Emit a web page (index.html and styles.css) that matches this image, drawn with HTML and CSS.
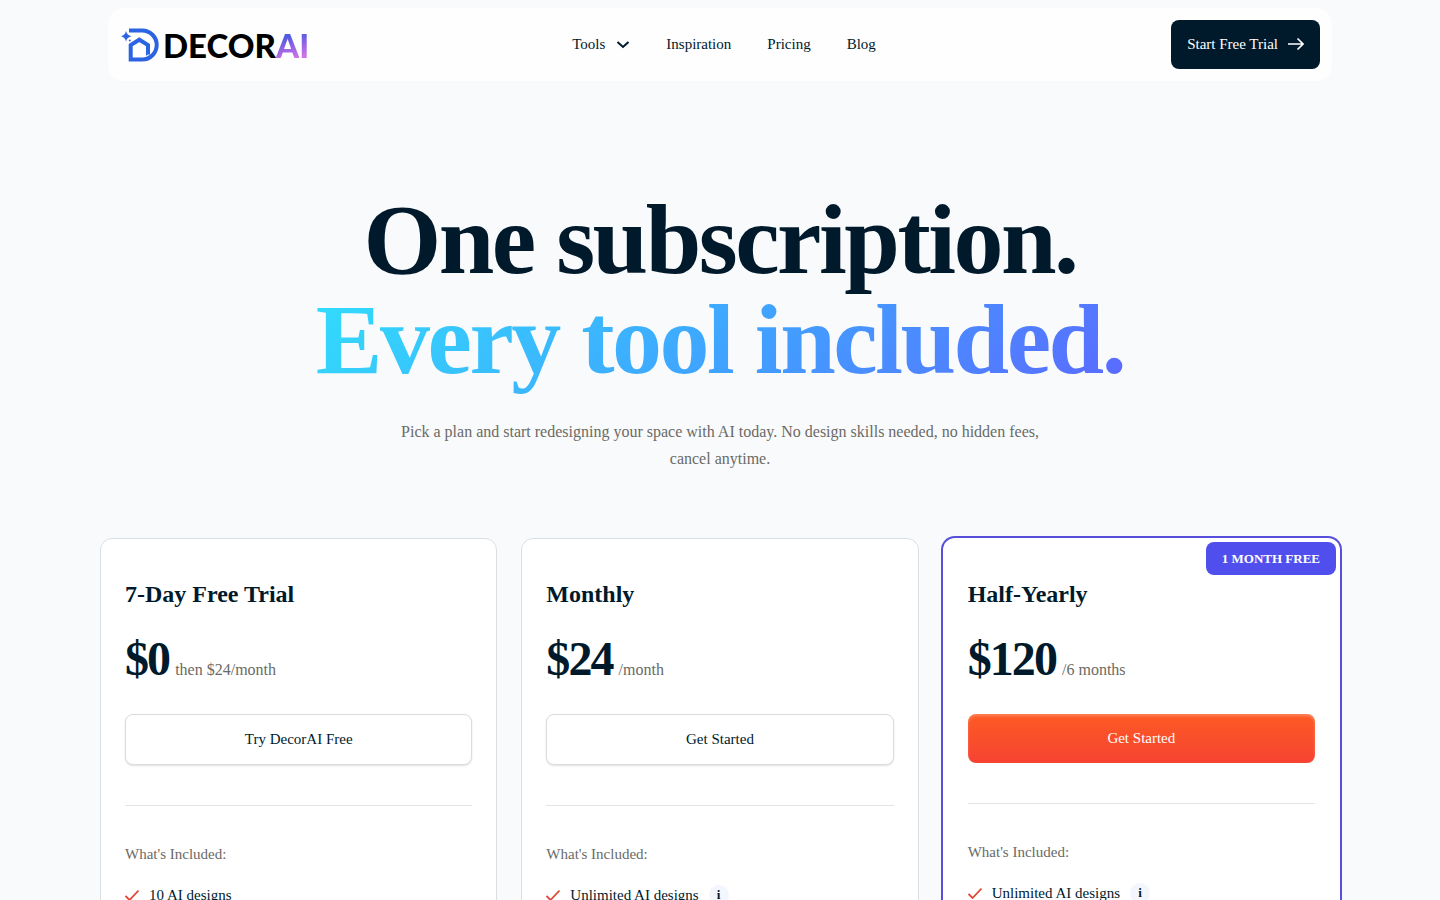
FILE: index.html
```html
<!DOCTYPE html>
<html lang="en">
<head>
<meta charset="utf-8">
<meta name="viewport" content="width=device-width, initial-scale=1">
<title>DecorAI Pricing</title>
<link rel="stylesheet" href="styles.css">
</head>
<body>
<header class="header">
  <a class="logo" href="#" aria-label="DecorAI home">
    <svg class="logo-mark" viewBox="0 0 38 34" aria-hidden="true">
      <path d="M8 2.500h13.200a14.500 14.500 0 0 1 0 29H9.700V17l8.600-5.300L27 17v9.500" fill="none" stroke="#2b63e3" stroke-width="4"/>
      <path d="M25 26l4-1.500V24l-4 4z" fill="#2b63e3"/>
      <path d="M5 3q1 4.300 5.500 5.300Q6 9.300 5 13.600 4 9.300-.200 8.300 4 7.300 5 3z" fill="#2b63e3"/>
      <circle cx="8.800" cy="12.600" r="1" fill="#2b63e3"/>
    </svg>
    <span class="logo-text">DECOR<span class="logo-ai">AI</span></span>
  </a>
  <nav class="nav" aria-label="Main">
    <button class="nav-item" type="button">Tools
      <svg class="chevron" viewBox="0 0 14 14" aria-hidden="true"><path d="M1.500 5l5.500 5 5.500-5" fill="none" stroke="currentColor" stroke-width="2"/></svg>
    </button>
    <a class="nav-item" href="#">Inspiration</a>
    <a class="nav-item" href="#">Pricing</a>
    <a class="nav-item" href="#">Blog</a>
  </nav>
  <a class="trial" href="#">Start Free Trial
    <svg class="arrow" viewBox="0 0 16 16" aria-hidden="true"><path d="M0 8h15M9.500 2.500L15 8l-5.500 5.500" fill="none" stroke="currentColor" stroke-width="1.600"/></svg>
  </a>
</header>
<main>
  <section class="hero">
    <h1 class="title">One subscription.<br><span class="title-accent">Every tool included.</span></h1>
    <p class="subtitle">Pick a plan and start redesigning your space with AI today. No design skills needed, no hidden fees, cancel anytime.</p>
  </section>
  <section class="plans" aria-label="Plans">
    <article class="card">
      <h2 class="plan">7-Day Free Trial</h2>
      <p class="price"><strong class="amount">$0</strong><span class="period">then $24/month</span></p>
      <button class="cta" type="button">Try DecorAI Free</button>
      <hr class="rule">
      <p class="included">What's Included:</p>
      <ul class="features">
        <li class="feature"><svg class="check" viewBox="0 0 14 14" aria-hidden="true"><path d="M.500 8l4 4 9-9.500" fill="none" stroke="currentColor" stroke-width="1.800"/></svg>10 AI designs</li>
      </ul>
    </article>
    <article class="card">
      <h2 class="plan">Monthly</h2>
      <p class="price"><strong class="amount">$24</strong><span class="period">/month</span></p>
      <button class="cta" type="button">Get Started</button>
      <hr class="rule">
      <p class="included">What's Included:</p>
      <ul class="features">
        <li class="feature"><svg class="check" viewBox="0 0 14 14" aria-hidden="true"><path d="M.500 8l4 4 9-9.500" fill="none" stroke="currentColor" stroke-width="1.800"/></svg>Unlimited AI designs<button class="info" type="button">i</button></li>
      </ul>
    </article>
    <article class="card card-featured">
      <span class="badge">1 MONTH FREE</span>
      <h2 class="plan">Half-Yearly</h2>
      <p class="price"><strong class="amount">$120</strong><span class="period">/6 months</span></p>
      <button class="cta cta-primary" type="button">Get Started</button>
      <hr class="rule">
      <p class="included">What's Included:</p>
      <ul class="features">
        <li class="feature"><svg class="check" viewBox="0 0 14 14" aria-hidden="true"><path d="M.500 8l4 4 9-9.500" fill="none" stroke="currentColor" stroke-width="1.800"/></svg>Unlimited AI designs<button class="info" type="button">i</button></li>
      </ul>
    </article>
  </section>
</main>
</body>
</html>
```
FILE: styles.css
```css
* { box-sizing: border-box; }

body {
  margin: 0;
  padding: 8px 24px 80px;
  background: #f9fafc;
  color: #001a2c;
  font-family: "Liberation Serif", "Times New Roman", serif;
  font-size: 15px;
  line-height: 24px;
}

h1, h2, p, ul { margin: 0; padding: 0; }
button { font: inherit; color: inherit; cursor: pointer; }
a { color: inherit; text-decoration: none; }

.header {
  display: grid;
  grid-template-columns: 1fr auto 1fr;
  align-items: center;
  max-width: 1224px;
  margin: 0 auto;
  padding: 12px;
  border-radius: 16px;
  background: #fefefe;
}

.logo { display: flex; align-items: center; gap: 4px; }
.logo-mark { width: 38px; height: 34px; margin-left: 1px; }
.logo-text {
  color: #000;
  font-family: Lato, sans-serif;
  font-size: 33px;
  font-weight: 900;
  line-height: 36px;
}
.logo-ai {
  background: linear-gradient(165deg, #4f5be0 30%, #a566e6 60%, #cf74e4 80%);
  background-clip: text;
  color: transparent;
}

.nav { display: flex; gap: 36px; padding: 0 0 2px 8px; }
.nav-item {
  display: flex;
  align-items: center;
  gap: 11px;
  padding: 0;
  border: 0;
  background: none;
}
.chevron { width: 14px; height: 14px; }

.trial {
  display: flex;
  align-items: center;
  justify-self: end;
  gap: 10px;
  height: 49px;
  padding: 0 16px 2px;
  border-radius: 8px;
  background: #001a2c;
  color: #fff;
}
.arrow { width: 16px; height: 16px; }

.hero { padding: 109px 0 66px; text-align: center; }
.title { font-size: 100px; font-weight: 700; line-height: 100px; letter-spacing: -0.025em; }
.title-accent {
  display: inline-block;
  padding-bottom: 6px;
  margin-bottom: -6px;
  background: linear-gradient(135deg, #32ddfb, #3fa5ff 50%, #5b68ff);
  background-clip: text;
  color: transparent;
}
.subtitle {
  max-width: 640px;
  margin: 28px auto 0;
  color: #6a6a65;
  font-size: 16px;
  line-height: 27px;
}

.plans {
  display: grid;
  grid-template-columns: repeat(3, minmax(0, 1fr));
  gap: 24px;
  max-width: 1240px;
  margin: 0 auto;
}
.card {
  position: relative;
  padding: 40px 24px;
  border: 1px solid #dcdfe1;
  border-radius: 12px;
  background: #fff;
}
.card-featured { border-color: transparent; box-shadow: 0 0 0 2px #574fdb; }
.badge {
  position: absolute;
  top: 3px;
  right: 3px;
  padding: 0 16px;
  border-radius: 8px;
  background: #504eed;
  color: #fff;
  font-size: 13px;
  font-weight: 700;
  line-height: 33px;
}
.plan { font-size: 24px; line-height: 31px; }
.price { display: flex; align-items: baseline; gap: 6px; margin-top: 20px; }
.amount { font-size: 48px; line-height: 58px; letter-spacing: -0.04em; }
.period { color: #6a6a65; font-size: 16px; }
.cta {
  width: 100%;
  height: 51px;
  margin-top: 26px;
  padding: 0 0 2px;
  border: 1px solid #dadcde;
  border-radius: 8px;
  background: #fff;
  box-shadow: 0 1px 2px rgb(0 0 0 / 12%);
}
.cta-primary {
  height: 49px;
  border: 0;
  background: linear-gradient(#fd5b24, #f64232);
  box-shadow: inset 0 2px 3px rgb(255 255 255 / 25%);
  color: #fff;
}
.rule { margin: 40px 0 0; border: 0; border-top: 1px solid #e1e3e4; }
.included { margin-top: 36px; color: #6a6a65; }
.features { margin-top: 17px; list-style: none; }
.feature { display: flex; align-items: center; gap: 10px; }
.check { width: 14px; height: 14px; color: #df4633; }
.info {
  width: 20px;
  height: 20px;
  padding: 0;
  border: 0;
  border-radius: 50%;
  background: #f4f6fe;
  font-size: 13px;
  font-weight: 700;
  line-height: 20px;
}
```
